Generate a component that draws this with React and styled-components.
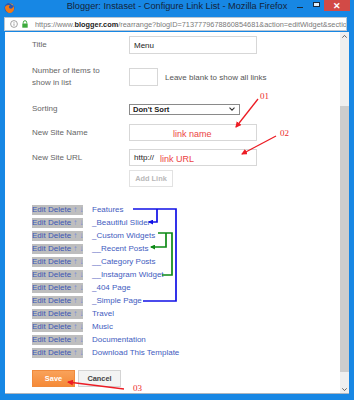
import React from 'react';
import styled, { createGlobalStyle } from 'styled-components';

const GlobalStyle = createGlobalStyle`
  html, body {
    margin: 0;
    padding: 0;
    width: 354px;
    height: 400px;
    overflow: hidden;
    background: #1787e4;
  }
  * { box-sizing: border-box; }
`;

// Window chrome
const Window = styled.div`
  width: 354px;
  height: 400px;
  background: #1787e4;
  display: flex;
  flex-direction: column;
  font-family: "Liberation Sans", Arial, sans-serif;
  padding-bottom: 6px;
`;

const TitleBar = styled.div`
  height: 15px;
  display: grid;
  grid-template-columns: 1fr auto 1fr;
  align-items: start;
`;

const TitleText = styled.div`
  font-size: 9.2px;
  line-height: 13px;
  color: #14243a;
  white-space: nowrap;
`;

const FoxSlot = styled.div`
  padding-left: 4px;
  height: 11px;
`;

const Controls = styled.div`
  justify-self: end;
  display: flex;
  align-items: flex-start;
  padding-right: 4px;
`;

const CtrlButton = styled.div`
  width: ${p => p.$w || 15}px;
  height: 11px;
  display: flex;
  align-items: center;
  justify-content: center;
  background: ${p => (p.$close ? '#d24a46' : 'transparent')};
  color: #fff;
  font-size: 9px;
  font-weight: bold;
`;

const MinBar = styled.div`
  width: 6px;
  height: 1px;
  background: #1a2a3c;
  margin-top: 3px;
`;

const MaxBox = styled.div`
  width: 7px;
  height: 5px;
  border: 1px solid #1a2a3c;
  background: #dfeefb;
  margin-top: -3px;
`;

const UrlRow = styled.div`
  height: 17px;
  padding: 2px 7px 1px 4px;
`;

const UrlField = styled.div`
  height: 14px;
  background: #fff;
  border: 1px solid #b9c6d3;
  display: flex;
  align-items: center;
  padding-left: 5px;
  gap: 4px;
`;

const UrlText = styled.span`
  font-size: 7.35px;
  color: #7a7a7a;
  white-space: nowrap;
  overflow: hidden;
  margin-left: 3px;
  b {
    color: #222;
    font-weight: bold;
  }
`;

const Viewport = styled.div`
  flex: 1;
  margin: 0 5px;
  display: flex;
  background: #fff;
  border-bottom: 1px solid #aeb6bf;
  overflow: hidden;
`;

const Page = styled.div`
  flex: 1;
  position: relative;
  padding: 4px 0 0 27px;
  font-size: 8px;
`;

// Scrollbar
const Scrollbar = styled.div`
  width: 9px;
  background: #efefef;
  display: flex;
  flex-direction: column;
`;

const ScrollArrow = styled.div`
  height: ${p => p.$h}px;
  display: flex;
  justify-content: center;
  align-items: ${p => (p.$bottom ? 'flex-end' : 'flex-start')};
  padding: ${p => (p.$bottom ? '0 0 2px' : '3px 0 0')};
`;

const Thumb = styled.div`
  height: 266px;
  margin-top: auto;
  background: #cdcdcd;
`;

// Form
const Field = styled.div`
  display: grid;
  grid-template-columns: 97px auto 1fr;
  align-items: ${p => p.$align || 'center'};
  margin-top: ${p => p.$mt || 0}px;
`;

const Label = styled.div`
  color: #666;
  font-size: 8px;
  line-height: 12px;
`;

const TextBox = styled.div`
  width: ${p => p.$w}px;
  height: ${p => p.$h}px;
  margin-top: ${p => p.$mt || 0}px;
  border: 1px solid #d7d7d7;
  background: #fff;
  display: flex;
  align-items: center;
  padding-left: 4px;
  color: #222;
  font-size: 8px;
  white-space: nowrap;
`;

const Hint = styled.span`
  color: #555;
  font-size: 8px;
  margin: 8px 0 0 7px;
`;

const Scribble = styled.span`
  color: #ec4343;
  font-size: 9px;
  margin-left: ${p => p.$ml}px;
  margin-top: 2px;
`;

const SelectBox = styled.div`
  width: 111px;
  height: 11px;
  border: 1px solid #8a8a8a;
  display: flex;
  align-items: center;
  justify-content: space-between;
  padding: 0 4px 0 3px;
  font-size: 7.6px;
  font-weight: bold;
  color: #222;
`;

const GhostButton = styled.div`
  width: 44px;
  height: 17px;
  border: 1px solid #e2e2e2;
  display: flex;
  align-items: center;
  justify-content: center;
  color: #b8b8b8;
  font-size: 7.4px;
  font-weight: bold;
`;

// Link list
const LinkList = styled.div`
  margin-top: 16px;
  display: flex;
  flex-direction: column;
`;

const LinkRow = styled.div`
  height: 13px;
  display: flex;
  align-items: center;
`;

const RowTools = styled.div`
  width: 51px;
  height: 10px;
  background: #bebebe;
  color: #3b56b4;
  font-size: 8px;
  line-height: 10px;
  white-space: nowrap;
  overflow: hidden;
  span {
    color: #6d86d6;
  }
`;

const LinkName = styled.span`
  margin-left: 9px;
  color: #3f5cc0;
  font-size: 8px;
  white-space: pre;
`;

const Actions = styled.div`
  display: flex;
  gap: 3px;
  margin-top: 11px;
`;

const Button = styled.div`
  width: 43px;
  height: 17px;
  display: flex;
  align-items: center;
  justify-content: center;
  font-size: 7.4px;
  font-weight: bold;
  border: 1px solid ${p => (p.$primary ? '#f08a3c' : '#d4d4d4')};
  background: ${p => (p.$primary ? 'linear-gradient(#f9a25a, #f58a38)' : '#f3f3f3')};
  color: ${p => (p.$primary ? '#fff' : '#444')};
`;

const Overlay = styled.svg`
  position: absolute;
  left: 0;
  top: 0;
  width: 100%;
  height: 100%;
  pointer-events: none;
  overflow: visible;
`;

const links = [
  'Features',
  '_Beautiful Slider',
  '_Custom Widgets',
  '__Recent Posts',
  '__Category Posts',
  '__Instagram Widget',
  '_404 Page',
  '_Simple Page',
  'Travel',
  'Music',
  'Documentation',
  'Download This Template',
];

const FoxIcon = () => (
  <svg width="11" height="11" viewBox="0 0 11 11">
    <circle cx="5.5" cy="5" r="5" fill="#2a57b0" />
    <path d="M1 4 C1 8 4 10.5 6.5 10 C9.5 9.5 11 6 9.5 3 C9 5 7.5 6 6 5.5 C4.5 5 4.5 3 6 2.5 C4 1.5 2 2.5 1 4 Z" fill="#f07a18" />
    <path d="M9.5 3 C9 1 7 0 5 0.3 C7 1 8.5 2 9.5 3 Z" fill="#ffb12a" />
  </svg>
);

const InfoIcon = () => (
  <svg width="8" height="8" viewBox="0 0 8 8">
    <circle cx="4" cy="4" r="3.4" fill="none" stroke="#8a8a8a" strokeWidth="0.8" />
    <rect x="3.6" y="3.4" width="0.8" height="2.4" fill="#8a8a8a" />
    <rect x="3.6" y="2" width="0.8" height="0.8" fill="#8a8a8a" />
  </svg>
);

const LockIcon = () => (
  <svg width="6" height="8" viewBox="0 0 6 8">
    <path d="M1.3 3.5 V2.4 A1.7 1.7 0 0 1 4.7 2.4 V3.5" fill="none" stroke="#3caa3c" strokeWidth="1" />
    <rect x="0.3" y="3.5" width="5.4" height="4.2" fill="#3caa3c" />
  </svg>
);

const Chevron = () => (
  <svg width="6" height="4" viewBox="0 0 6 4">
    <path d="M0.5 0.7 L3 3.2 L5.5 0.7" fill="none" stroke="#333" strokeWidth="1.1" />
  </svg>
);

const ScrollGlyph = ({ down }) => (
  <svg width="5" height="3" viewBox="0 0 5 3">
    <path d={down ? 'M0.3 0.3 L2.5 2.6 L4.7 0.3' : 'M0.3 2.7 L2.5 0.4 L4.7 2.7'} fill="none" stroke="#555" strokeWidth="0.9" />
  </svg>
);

// hand-drawn markup lying over the form
const Annotations = () => (
  <Overlay>
    <defs>
      <marker id="red" markerWidth="6" markerHeight="6" refX="5" refY="3" orient="auto" markerUnits="userSpaceOnUse">
        <path d="M0 0 L6 3 L0 6 Z" fill="#ec1c24" />
      </marker>
      <marker id="blue" markerWidth="5" markerHeight="5" refX="4" refY="2.5" orient="auto" markerUnits="userSpaceOnUse">
        <path d="M0 0 L5 2.5 L0 5 Z" fill="#1010e6" />
      </marker>
      <marker id="green" markerWidth="5" markerHeight="5" refX="4" refY="2.5" orient="auto" markerUnits="userSpaceOnUse">
        <path d="M0 0 L5 2.5 L0 5 Z" fill="#0d8a16" />
      </marker>
    </defs>
    <g fontFamily='"Liberation Serif", serif' fontSize="9" fill="#ec2a2a">
      <text x="255" y="67">01</text>
      <text x="275" y="104">02</text>
      <text x="128" y="359">03</text>
    </g>
    <g stroke="#ec1c24" strokeWidth="1.3" fill="none">
      <path d="M253 67 L231 95" markerEnd="url(#red)" />
      <path d="M271 104 L237 122" markerEnd="url(#red)" />
      <path d="M119 357 L63 350" markerEnd="url(#red)" />
    </g>
    <g stroke="#1010e6" strokeWidth="1.7" fill="none">
      <path d="M128 177 H171 V269 H138" />
      <path d="M152 177 V190 H144" markerEnd="url(#blue)" />
    </g>
    <g stroke="#0d8a16" strokeWidth="1.7" fill="none">
      <path d="M153 201 H167 V243 H157" />
      <path d="M161 201 V215 H146" markerEnd="url(#green)" />
    </g>
  </Overlay>
);

export default function App() {
  return (
    <>
      <GlobalStyle />
      <Window>
        <TitleBar>
          <FoxSlot>
            <FoxIcon />
          </FoxSlot>
          <TitleText>Blogger: Instaset - Configure Link List - Mozilla Firefox</TitleText>
          <Controls>
            <CtrlButton $w={16}><MinBar /></CtrlButton>
            <CtrlButton $w={16}><MaxBox /></CtrlButton>
            <CtrlButton $w={26} $close>✕</CtrlButton>
          </Controls>
        </TitleBar>
        <UrlRow>
          <UrlField>
            <InfoIcon />
            <LockIcon />
            <UrlText>
              https://www.<b>blogger.com</b>/rearrange?blogID=7137779678860854681&amp;action=editWidget&amp;sectio
            </UrlText>
          </UrlField>
        </UrlRow>
        <Viewport>
          <Page>
            <Field>
              <Label>Title</Label>
              <TextBox $w={128} $h={18}>Menu</TextBox>
            </Field>
            <Field $mt={11} $align="start">
              <Label>Number of items to<br />show in list</Label>
              <TextBox $w={29} $h={18} $mt={3} />
              <Hint>Leave blank to show all links</Hint>
            </Field>
            <Field $mt={14}>
              <Label>Sorting</Label>
              <SelectBox>
                Don't Sort
                <Chevron />
              </SelectBox>
            </Field>
            <Field $mt={9}>
              <Label>New Site Name</Label>
              <TextBox $w={128} $h={17}>
                <Scribble $ml={39}>link name</Scribble>
              </TextBox>
            </Field>
            <Field $mt={8}>
              <Label>New Site URL</Label>
              <TextBox $w={128} $h={17}>
                http://
                <Scribble $ml={6}>link URL</Scribble>
              </TextBox>
            </Field>
            <Field $mt={4}>
              <span />
              <GhostButton>Add Link</GhostButton>
            </Field>
            <LinkList>
              {links.map(name => (
                <LinkRow key={name}>
                  <RowTools>Edit Delete <span>↑ ↓</span></RowTools>
                  <LinkName>{name}</LinkName>
                </LinkRow>
              ))}
            </LinkList>
            <Actions>
              <Button $primary>Save</Button>
              <Button>Cancel</Button>
            </Actions>
            <Annotations />
          </Page>
          <Scrollbar>
            <ScrollArrow $h={14}><ScrollGlyph /></ScrollArrow>
            <Thumb />
            <ScrollArrow $h={21} $bottom><ScrollGlyph down /></ScrollArrow>
          </Scrollbar>
        </Viewport>
      </Window>
    </>
  );
}
